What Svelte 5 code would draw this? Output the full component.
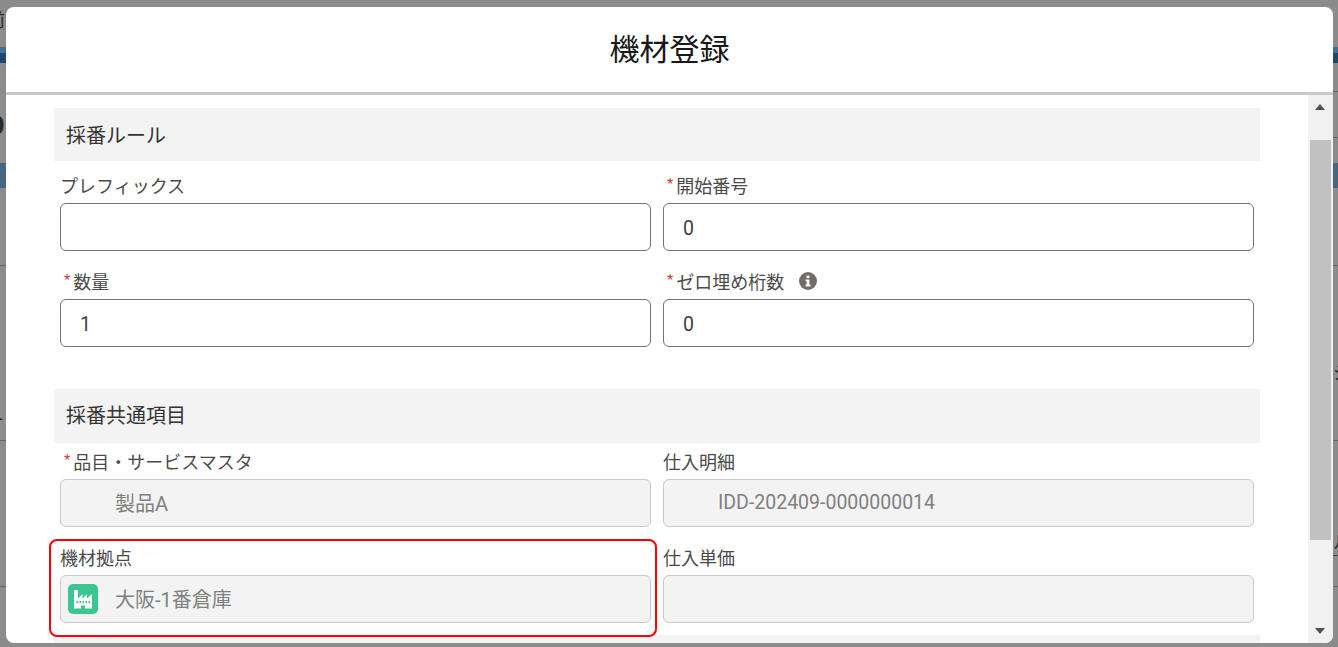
<script>
  const ruleFields = [
    { label: 'プレフィックス', value: '' },
    { label: '開始番号', value: '0', required: true },
    { label: '数量', value: '1', required: true },
    { label: 'ゼロ埋め桁数', value: '0', required: true, info: true }
  ];

  const commonFields = [
    { label: '品目・サービスマスタ', value: '製品A', required: true, lookup: true },
    { label: '仕入明細', value: 'IDD-202409-0000000014', lookup: true },
    { label: '機材拠点', value: '大阪-1番倉庫', lookup: true, icon: true, marked: true },
    { label: '仕入単価', value: '' }
  ];

  const isLatin = (text) => /^[\x20-\x7e]+$/.test(text);
</script>

{#snippet field(f, disabled)}
  <div class="field" class:marked={f.marked}>
    <div class="label">
      {#if f.required}<span class="req">*</span>{/if}
      <span>{f.label}</span>
      {#if f.info}
        <svg class="info" viewBox="0 0 18 18" aria-hidden="true">
          <circle cx="9" cy="9" r="9" fill="#706e6b" />
          <rect x="7.6" y="3.6" width="2.8" height="2.4" fill="#fff" />
          <path d="M6.6 7.400h3.800v5.200h1.100v1.800H6.600v-1.800h1.100v-3.400h-1.100z" fill="#fff" />
        </svg>
      {/if}
    </div>
    <div class="control">
      {#if f.icon}
        <svg class="factory" viewBox="0 0 30 30" aria-hidden="true">
          <rect width="30" height="30" rx="5" fill="#3bc590" />
          <path d="M6 6H10V14.500L14.500 10V14.500L19 10V14.500L24 10V24.500H17V21.500H13V24.500H6Z" fill="#fff" />
          <path d="M8.500 17h1.500v2.200H8.500zM11.500 17h1.500v2.200h-1.500zM14.500 17h1.500v2.200h-1.500zM17.500 17h1.500v2.200h-1.500zM20.500 17h1.500v2.200h-1.500z" fill="#3bc590" />
        </svg>
      {/if}
      <input class:lookup={f.lookup} class:latin={isLatin(f.value)} value={f.value} {disabled} readonly />
    </div>
  </div>
{/snippet}

<div class="page">
  <div class="backdrop">
    <div class="row r1"><span class="edge">前</span></div>
    <div class="row blue"></div>
    <div class="row r2"><span class="edge big">0</span></div>
    <div class="row blue2"></div>
    <div class="row r4"></div>
    <div class="row r5"><span class="edge one">1</span><span class="edge right">ジ</span></div>
    <div class="row r6"></div>
    <div class="row r7"><span></span><span class="edge right low">ル</span></div>
    <div class="row r8"></div>
  </div>

  <div class="modal" role="dialog">
    <header><h2>機材登録</h2></header>
    <div class="body">
      <div class="content">
        <div class="section">採番ルール</div>
        <div class="grid first">
          {#each ruleFields as f}
            {@render field(f, false)}
          {/each}
        </div>
        <div class="section tall">採番共通項目</div>
        <div class="grid">
          {#each commonFields as f}
            {@render field(f, true)}
          {/each}
        </div>
        <div class="section"></div>
      </div>
      <div class="scrollbar">
        <div class="arrow up"></div>
        <div class="thumb"></div>
        <div class="arrow down"></div>
      </div>
    </div>
  </div>
</div>

<style>
  :global(body) {
    margin: 0;
    overflow: hidden;
    font-family: "Liberation Sans", "Noto Sans CJK JP", sans-serif;
  }

  .page {
    position: relative;
    width: 1338px;
    height: 647px;
    overflow: hidden;
    background: #8c8c8c;
  }

  .row {
    display: flex;
    justify-content: space-between;
    align-items: flex-start;
    overflow: hidden;
    color: #2a2a2a;
    box-sizing: border-box;
  }

  .r1 { height: 47px; padding-top: 6px; }
  .blue { height: 16px; background: linear-gradient(#41709a 0 6px, #1f4766 6px); }
  .r2 {
    height: 100px;
    background:
      linear-gradient(#666, #666) right 28px / 6px 1px no-repeat,
      linear-gradient(#666, #666) right 74px / 6px 1px no-repeat;
  }
  .blue2 { height: 25px; background: #48667f; }
  .r4 { height: 78px; border-bottom: 1px solid #666; }
  .r5 { height: 175px; border-bottom: 1px solid #666; }
  .r6 { height: 74px; }
  .r7 {
    height: 72px;
    border-bottom: 1px solid #666;
    background: linear-gradient(#444, #444) right 40px / 6px 1px no-repeat;
  }
  .r8 { height: 60px; }

  .edge {
    font-size: 18px;
    margin-left: -13px;
  }

  .edge.big {
    font-size: 26px;
    font-weight: bold;
    margin-top: 47px;
    margin-left: -10px;
  }

  .edge.one {
    margin-left: -7px;
    margin-top: 138px;
  }

  .edge.right {
    margin-left: 0;
    margin-right: -13px;
    margin-top: 92px;
  }

  .edge.right.low {
    margin-top: 13px;
  }

  .modal {
    position: absolute;
    left: 6px;
    top: 7px;
    width: 1327px;
    height: 636px;
    background: #fff;
    border-radius: 8px;
    overflow: hidden;
    display: flex;
    flex-direction: column;
  }

  header {
    height: 85px;
    flex: none;
    box-sizing: content-box;
    border-bottom: 3px solid #c9c9c9;
    display: flex;
    align-items: center;
    justify-content: center;
  }

  h2 {
    margin: 0 0 6px;
    font-size: 30px;
    font-weight: 400;
    color: #181818;
  }

  .body {
    flex: 1;
    min-height: 0;
    display: flex;
  }

  .content {
    flex: 1;
    min-width: 0;
    overflow: hidden;
    padding: 13px 48px 0;
  }

  .section {
    height: 53px;
    box-sizing: border-box;
    background: #f3f3f3;
    padding-left: 12px;
    display: flex;
    align-items: center;
    font-size: 20px;
    color: #333;
  }

  .section.tall {
    height: 54px;
    padding-bottom: 3px;
  }

  .grid {
    display: grid;
    grid-template-columns: 1fr 1fr;
    row-gap: 12px;
    margin-bottom: 12px;
  }

  .grid.first {
    margin-top: 6px;
    margin-bottom: 42px;
  }

  .field {
    position: relative;
    padding: 0 6px;
  }

  .field.marked::after {
    content: "";
    position: absolute;
    left: -5px;
    top: 0;
    width: 608px;
    height: 98px;
    box-sizing: border-box;
    border: 2px solid #f00;
    border-radius: 8px;
    pointer-events: none;
  }

  .label {
    height: 36px;
    display: flex;
    align-items: center;
    font-size: 18px;
    color: #4a4a4a;
    box-sizing: border-box;
  }

  .req {
    color: #c23934;
    margin: 0 3px 0 4px;
    font-size: 16px;
  }

  .info {
    width: 18px;
    height: 18px;
    margin-left: 15px;
  }

  .control {
    position: relative;
  }

  input {
    display: block;
    width: 100%;
    height: 48px;
    box-sizing: border-box;
    border: 1px solid #747474;
    border-radius: 6px;
    padding: 2px 19px 0;
    background: #fff;
    color: #3e3e3c;
    font: 20px "Roboto", "Noto Sans CJK JP", sans-serif;
    outline: none;
  }

  input.latin {
    font-size: 19.5px;
  }

  input:disabled {
    background: #f3f3f3;
    border-color: #c9c9c9;
    color: #808080;
    opacity: 1;
    -webkit-text-fill-color: #808080;
    padding-top: 0;
    padding-bottom: 2px;
  }

  input.lookup {
    padding-left: 54px;
  }

  .factory {
    position: absolute;
    left: 8px;
    top: 9px;
    width: 30px;
    height: 30px;
  }

  .scrollbar {
    flex: none;
    width: 25px;
    background: #f1f1f1;
    display: flex;
    flex-direction: column;
    align-items: center;
  }

  .arrow {
    flex: none;
    height: 45px;
    width: 100%;
    position: relative;
  }

  .arrow::after {
    content: "";
    position: absolute;
    left: 7px;
    border-left: 5.5px solid transparent;
    border-right: 5.5px solid transparent;
  }

  .arrow.up::after {
    top: 9px;
    border-bottom: 6px solid #505050;
  }

  .arrow.down {
    height: 103px;
  }

  .arrow.down::after {
    bottom: 9px;
    border-top: 6px solid #505050;
  }

  .thumb {
    flex: none;
    width: 21px;
    height: 400px;
    background: #c1c1c1;
  }
</style>
